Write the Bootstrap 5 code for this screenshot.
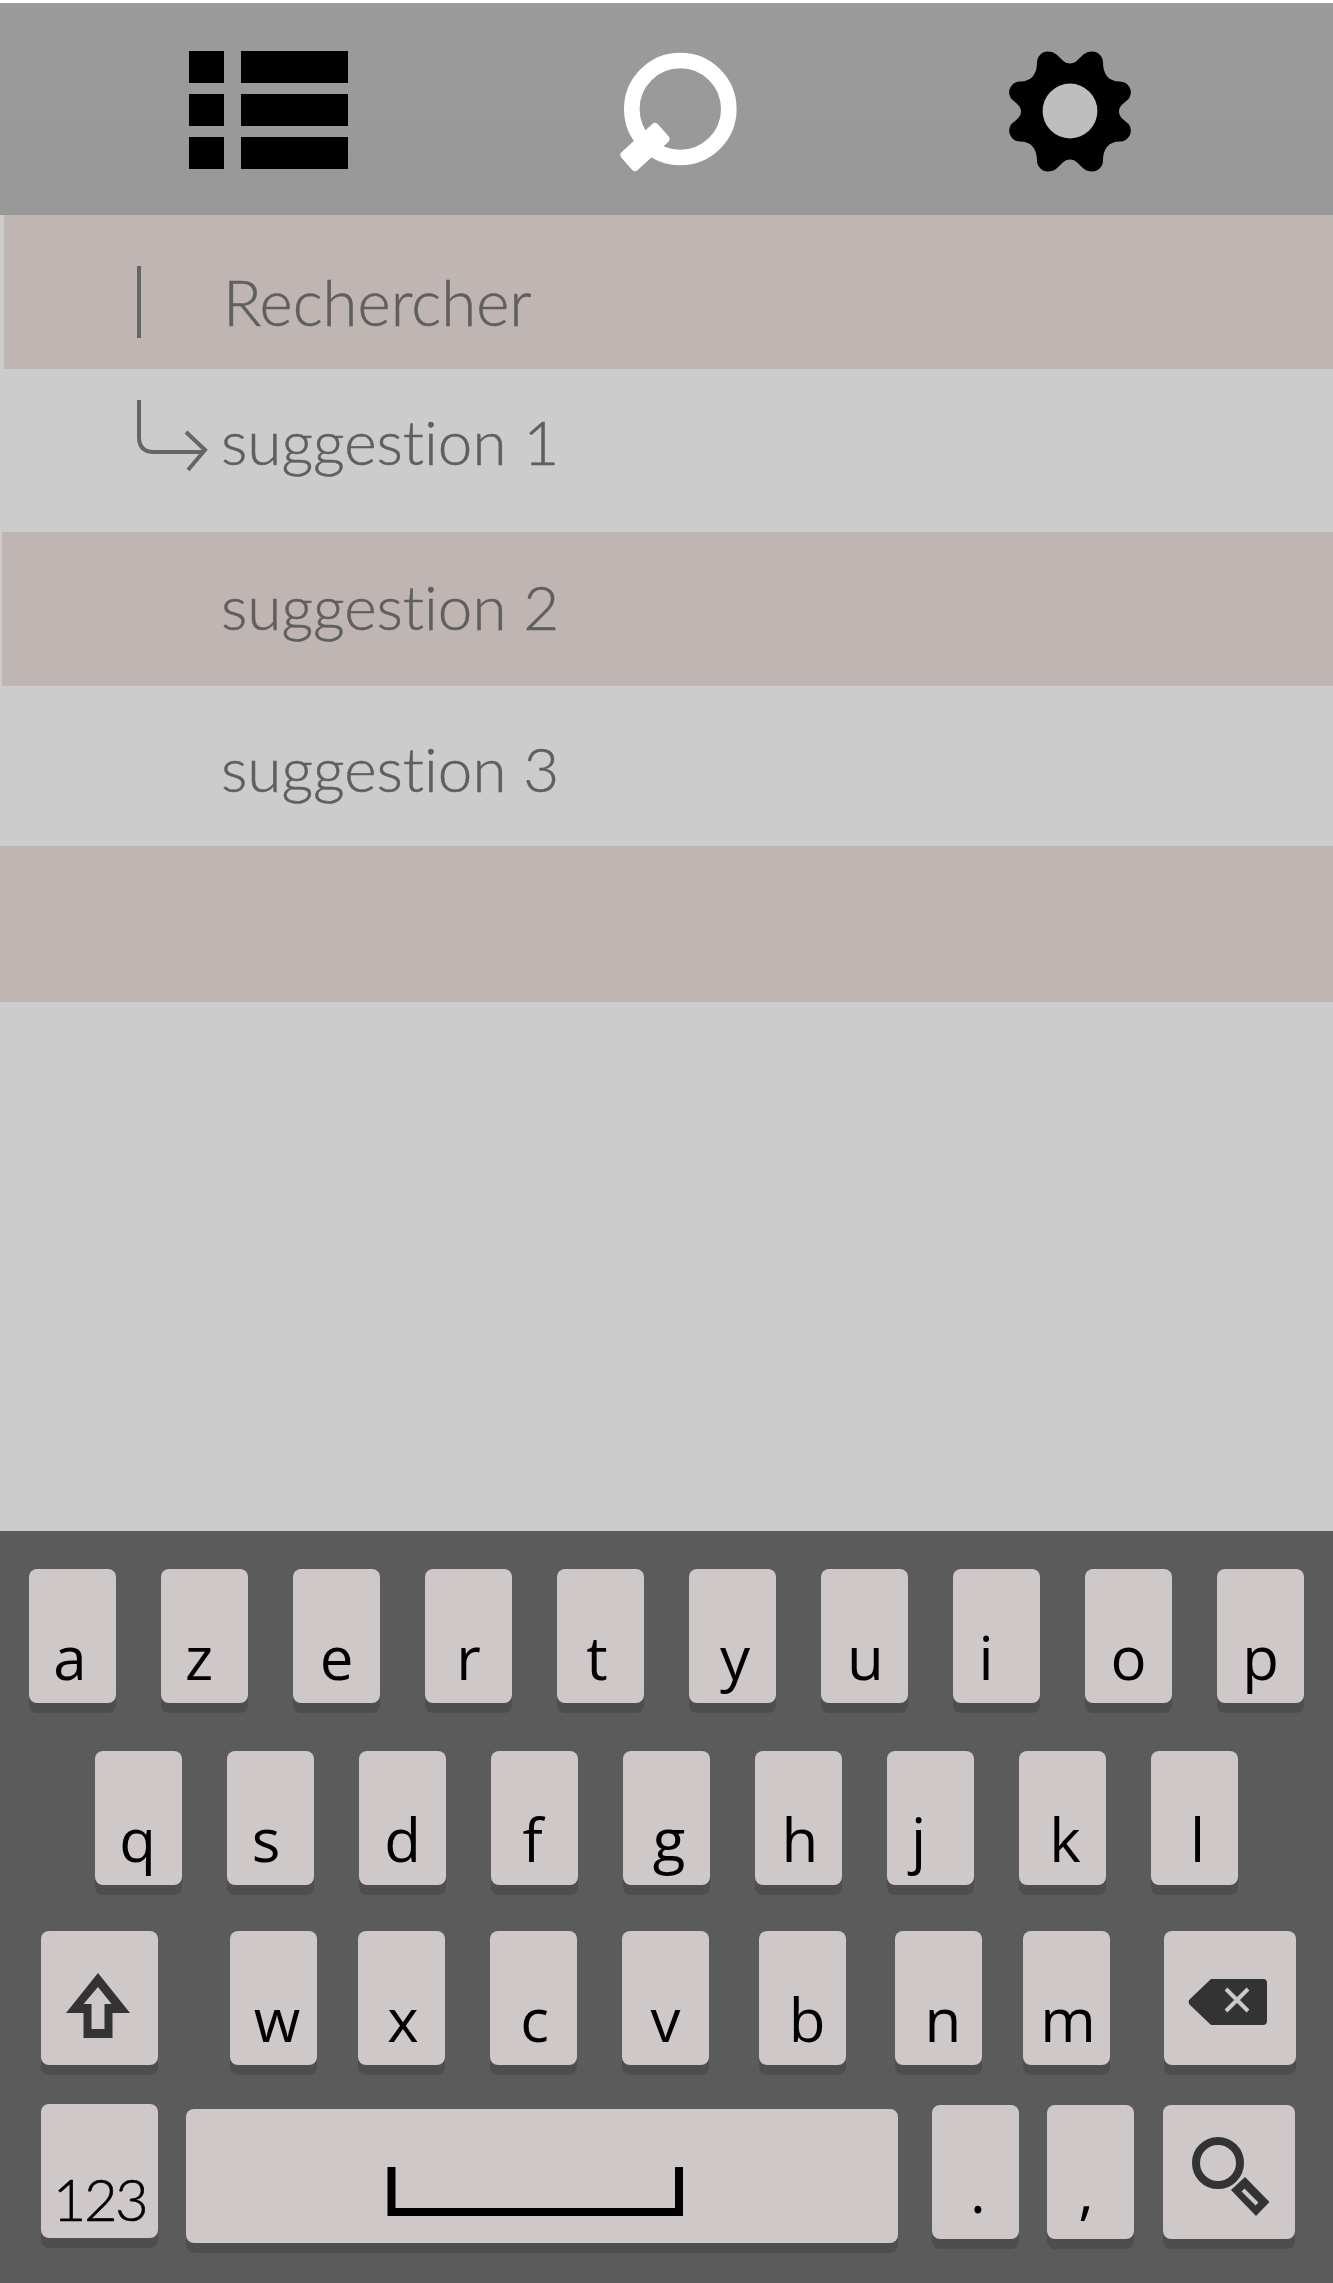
<!doctype html>
<html lang="fr"><head><meta charset="utf-8"><title>Recherche</title>
<link href="https://cdn.jsdelivr.net/npm/bootstrap@5.3.0/dist/css/bootstrap.min.css" rel="stylesheet">
<style>
html,body{margin:0;background:#ccc;height:2283px;overflow:hidden}
.app-shell{width:1333px;height:2283px;display:flex;flex-direction:column;background:#ccc;border-top:3px solid #fff}
.top-tabs{height:212px;flex:none;background:linear-gradient(#9b9b9b,#989898)}
.top-tabs svg{display:block;margin-top:-3px}
.result-row{flex:none;font-family:Lato,sans-serif;font-weight:300;font-size:62px;line-height:1;color:#5f5f5f;font-variant-ligatures:none;-webkit-text-stroke:.5px #5f5f5f;position:relative;padding-left:221px}
.row-input{height:154px;background:#bfb6b4;margin-left:4px;padding-left:219px;padding-top:55px;font-size:63.5px}
.row-b{height:163px;padding-top:41px}
.row-c{height:154px;background:#bfb6b4;margin-left:2px;padding-left:219px;padding-top:43px}
.row-d{height:160px;padding-top:51px}
.row-e{height:156px;background:#bfb6b4}
.filler{flex:1}
.kbd-panel{flex:none;height:752px;background:#5b5b5b;font-family:"Open Sans",sans-serif;color:#000;padding-top:38px}
.kbd-row{display:flex;height:134px}
.kr1{padding-left:29px;gap:45px;margin-bottom:48px}
.kr2{padding-left:95px;gap:45px;margin-bottom:46px}
.kr3{padding-left:41px;margin-bottom:39px}
.kr4{padding-left:41px;align-items:flex-start;height:139px}
.kb{width:87px;height:134px;flex:none;background:#cec8c9;border-radius:8px;box-shadow:0 10px 0 #4e4e4e;display:flex;justify-content:center;align-items:flex-end;font-size:60px;line-height:1;border-bottom:16px solid transparent;background-clip:border-box}
.kb-wide{width:117px}
.kb-big{width:132px}
.kb-icon{border-bottom:0}
.kb-icon svg{display:block}
.kb-space{width:712px;margin-left:28px;margin-top:5px}
.kb-low{margin-top:1px}
.num-key{font-family:Lato,sans-serif;font-weight:300;font-size:58px;letter-spacing:-2.5px;border-bottom-width:10px;-webkit-text-stroke:.6px #000}
.caret-mark{position:absolute;left:133px;top:51px;width:3.5px;height:72px;background:#666}
.arrow-mark{position:absolute;left:0;top:0}
.g72{margin-left:72px}.g41{margin-left:41px}.g45{margin-left:45px}.g50{margin-left:50px}.g49{margin-left:49px}.g54{margin-left:54px}.g34{margin-left:34px}.g28{margin-left:28px}.g29{margin-left:29px}
.l1{padding-right:2px}.l2{padding-right:4px}.l3{padding-right:5px}.l4{padding-right:7px}.l5{padding-right:9px}.l6{padding-right:11px}.l7{padding-right:21px}.l8{padding-right:24px}
.r1{padding-left:2px}.r2{padding-left:3px}.r3{padding-left:5px}.r4{padding-left:6px}.r5{padding-left:7px}.r6{padding-left:9px}
.dot-key{border-bottom-width:19px}
</style></head><body>
<div class="app-shell">
<div class="top-tabs">
<svg width="1333" height="215" viewBox="0 0 1333 215">
<g fill="#000"><rect x="189" y="51" width="35" height="32"/><rect x="241" y="51" width="107" height="32"/><rect x="189" y="94" width="35" height="32"/><rect x="241" y="94" width="107" height="32"/><rect x="189" y="137" width="35" height="32"/><rect x="241" y="137" width="107" height="32"/></g>
<circle cx="680.3" cy="109" r="48.5" fill="none" stroke="#fff" stroke-width="15.6"/>
<polygon points="655,127 665.5,139 635,167 624.5,155" fill="#fff" stroke="#fff" stroke-width="8" stroke-linejoin="round"/>
<path transform="translate(1070 111.5)" fill="#000" d="M0 -48C9 -48 11 -60 22 -60A11 11 0 0 1 33 -49C33 -38 38 -30 50 -30A11 11 0 0 1 59 -13C54 -8 49 -6 49 0C49 6 54 8 59 13A11 11 0 0 1 50 30C38 30 33 38 33 49A11 11 0 0 1 22 60C11 60 9 48 0 48C-9 48 -11 60 -22 60A11 11 0 0 1 -33 49C-33 38 -38 30 -50 30A11 11 0 0 1 -59 13C-54 8 -49 6 -49 0C-49 -6 -54 -8 -59 -13A11 11 0 0 1 -50 -30C-38 -30 -33 -38 -33 -49A11 11 0 0 1 -22 -60C-11 -60 -9 -48 0 -48Z"/>
<circle cx="1070" cy="111" r="27.4" fill="#bebebe"/>
</svg>
</div>
<div class="result-row row-input"><span>Rechercher</span><span class="caret-mark"></span></div>
<div class="result-row row-b"><span>suggestion 1</span>
<svg class="arrow-mark" width="220" height="163" viewBox="0 369 220 163"><path d="M139 400v37q0 15 15 15h50M186 432l19 18-17 20" fill="none" stroke="#666" stroke-width="4"/></svg></div>
<div class="result-row row-c"><span>suggestion 2</span></div>
<div class="result-row row-d"><span>suggestion 3</span></div>
<div class="result-row row-e"></div>
<div class="filler"></div>
<div class="kbd-panel">
<div class="kbd-row kr1"><div class="kb l3">a</div><div class="kb l6">z</div><div class="kb">e</div><div class="kb">r</div><div class="kb l4">t</div><div class="kb r3">y</div><div class="kb r1">u</div><div class="kb l7">i</div><div class="kb">o</div><div class="kb">p</div></div>
<div class="kbd-row kr2"><div class="kb l1">q</div><div class="kb l5">s</div><div class="kb">d</div><div class="kb l2">f</div><div class="kb r3">g</div><div class="kb r2">h</div><div class="kb l8">j</div><div class="kb r3">k</div><div class="kb r4">l</div></div>
<div class="kbd-row kr3">
<div class="kb kb-wide kb-icon"><svg width="117" height="134" viewBox="41 1931 117 134"><path fill="#333" fill-rule="evenodd" d="M98 1973L130 2013H112.5V2038H83.5V2013H66ZM98 1987L83.5 2004H91.5V2029H104.5V2004H111.6Z"/></svg></div>
<div class="kb g72 r5">w</div><div class="kb g41 r2">x</div><div class="kb g45 r1">c</div><div class="kb g45">v</div><div class="kb g50 r6">b</div><div class="kb g49 r6">n</div><div class="kb g41 r2">m</div>
<div class="kb kb-big g54 kb-icon"><svg width="132" height="134" viewBox="1164 1931 132 134"><path fill="#333" d="M1211 1979H1263a4 4 0 0 1 4 4V2021a4 4 0 0 1-4 4H1211L1190 2005a4 4 0 0 1 0-6Z"/><path d="M1226 1989L1248 2011M1248 1989L1226 2011" stroke="#cec8c9" stroke-width="4" fill="none"/></svg></div></div>
<div class="kbd-row kr4"><div class="kb kb-wide num-key">123</div>
<div class="kb kb-space kb-icon"><svg width="712" height="134" viewBox="186 2109 712 134"><path d="M391.5 2167V2212H679V2167" fill="none" stroke="#000" stroke-width="8"/></svg></div>
<div class="kb g34 kb-low dot-key r3">.</div><div class="kb g28 kb-low dot-key l5">,</div>
<div class="kb kb-big g29 kb-low kb-icon"><svg width="132" height="134" viewBox="1164 2105 132 134"><circle cx="1219" cy="2163" r="22" fill="none" stroke="#333" stroke-width="8"/><path fill="#333" d="M1232 2190L1246 2177L1270.5 2202L1257 2216Z"/><path d="M1244 2190L1258 2204" stroke="#cec8c9" stroke-width="4"/></svg></div></div>
</div>
</div>
</body></html>
